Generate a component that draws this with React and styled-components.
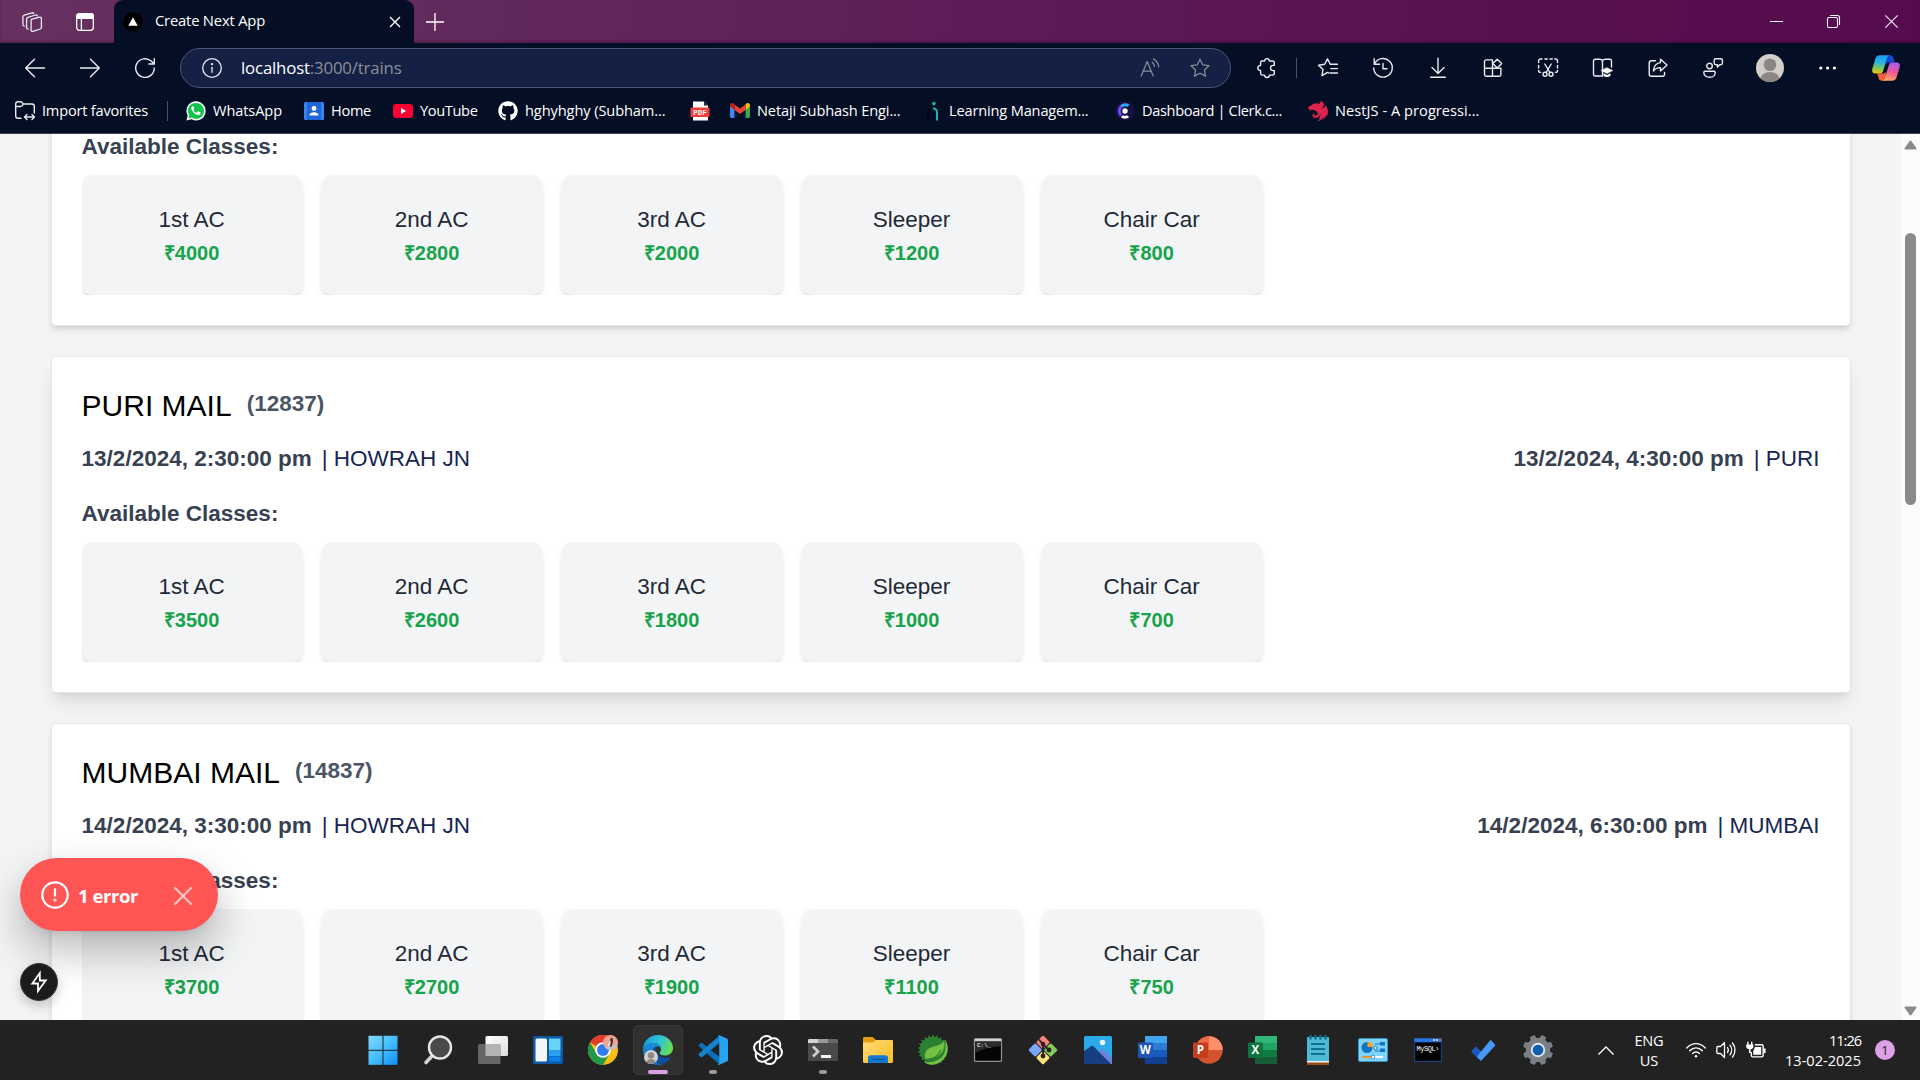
import React, { useLayoutEffect, useRef, useState } from "react";
import styled, { createGlobalStyle, css } from "styled-components";
import { FaGithub } from "react-icons/fa";
import { SiNestjs, SiOpenai } from "react-icons/si";

const GlobalStyle = createGlobalStyle`
  *, *::before, *::after { box-sizing: border-box; }
  html, body { margin: 0; padding: 0; overflow: hidden; }
  body { background: #040e24; }
  svg { display: block; flex: none; overflow: visible; }
`;

const uiFont = css`
  font-family: "Open Sans", "Noto Sans", sans-serif;
`;

/* ---------- fitted label ---------- */

const LabelBox = styled.span`
  ${uiFont}
  display: block;
  flex: none;
  width: ${(p) => p.$w}px;
  white-space: nowrap;
  font-size: ${(p) => p.$size || 14.6}px;
  font-weight: ${(p) => p.$weight || 400};
  color: ${(p) => p.$color || "#fff"};
  line-height: 20px;
`;

function Label({ w, children, size, weight, color }) {
  const ref = useRef(null);
  const [spacing, setSpacing] = useState(0);
  useLayoutEffect(() => {
    const el = ref.current;
    const natural = el.getBoundingClientRect().width;
    setSpacing((w - natural) / el.textContent.length);
  }, [w]);
  return (
    <LabelBox $w={w} $size={size} $weight={weight} $color={color}>
      <span ref={ref} style={{ letterSpacing: spacing ? `${spacing}px` : undefined }}>
        {children}
      </span>
    </LabelBox>
  );
}

/* ---------- line icons ---------- */

const Line = ({ size = 20, vb = 20, sw = 1.2, color = "#e9ebef", children }) => (
  <svg width={size} height={size} viewBox={`0 0 ${vb} ${vb}`} fill="none" stroke={color} strokeWidth={sw} strokeLinecap="round" strokeLinejoin="round">
    {children}
  </svg>
);

const Workspaces = () => (
  <Line size={22} vb={22} sw={1.3}>
    <path d="M10.500 8.400l8-2.300a1.500 1.500 0 0 1 1.900 1.500v8.800c0 .8-.4 1.300-1.200 1.600l-7.200 2.400a1.500 1.500 0 0 1-1.900-1.500V9.900c0-.8.100-1.300.4-1.500z" />
    <path d="M7 18c-.9-.2-1.400-.8-1.400-1.600V8.200c0-.9.500-1.500 1.300-1.800L14.700 4c.8-.2 1.500.3 1.700 1" />
    <path d="M3.300 15.200c-.9-.2-1.400-.8-1.400-1.600V6c0-.9.500-1.500 1.300-1.800L11 1.800c.8-.2 1.500.2 1.700.9" />
  </Line>
);
const TabsMenu = () => (
  <Line size={18} vb={18} sw={1.3} color="#fff">
    <rect x="0.7" y="0.7" width="16.600" height="16.600" rx="2.800" />
    <path d="M.7 5.400V3.300C.7 1.900 1.900.7 3.300.7h11.400c1.400 0 2.600 1.200 2.600 2.600v2.100z" fill="#fff" />
    <path d="M5.400 5.400v11.900" />
  </Line>
);
const BackIcon = () => <Line sw={1.4}><path d="M19.500 10H.7M9.500 1.200L.7 10l8.800 8.800" /></Line>;
const ForwardIcon = () => <Line sw={1.4}><path d="M.5 10h18.800M10.500 1.200l8.800 8.800-8.800 8.800" /></Line>;
const ReloadIcon = () => <Line sw={1.4}><path d="M19.300 10A9.300 9.300 0 1 1 16.200 3.100L19.300 6M19.300.6V6h-5.400" /></Line>;
const InfoIcon = () => (
  <Line sw={1.3}><circle cx="10" cy="10" r="9.300" /><path d="M10 9.300v5" /><circle cx="10" cy="6.200" r=".5" fill="#e9ebef" /></Line>
);
const ReadAloud = () => (
  <Line size={20} color="#8b8f99">
    <path d="M1.200 18L7.200 3.500 13.200 18M3.200 13.200h8" /><path d="M12.200 4.200c1.300 1 2.100 2.500 2.200 4.200M13.500.9c2.900 1.700 4.900 4.500 5.300 8" />
  </Line>
);
const starPath = "M10 1.200l2.700 5.600 6.200.9-4.500 4.300 1.100 6.100L10 15.200l-5.500 2.900 1.100-6.100L1.100 7.700l6.200-.9z";
const StarIcon = () => <Line color="#8b8f99"><path d={starPath} /></Line>;
const PuzzleIcon = () => (
  <Line sw={1.4}>
    <path d="M4.400 3h3.200c.1-1.500 1.100-2.400 2.400-2.400s2.300.9 2.400 2.400h3.100c1 0 1.800.8 1.800 1.800v2.600h-1.100c-1.600 0-2.700 1.100-2.700 2.600s1.100 2.600 2.700 2.600h1.100v2.700c0 1-.8 1.800-1.800 1.800h-3c-.1 1.400-1.200 2.400-2.500 2.400s-2.400-1-2.500-2.400H5.400c-1 0-1.800-.8-1.800-1.800v-2.700C2 12.500.8 11.500.8 10S2 7.500 3.600 7.400V4.800C3.600 3.800 3.900 3 4.400 3z" />
  </Line>
);
const Favorites = () => (
  <Line sw={1.4}>
    <path d="M10.500 14.900l-1-.5-5.500 3.300 1-6.300L.5 7.300l6.200-1L9.500.8l2.700 5.500h7.300M12.800 10.600h6.700M12 15h7.500" />
  </Line>
);
const HistoryIcon = () => <Line sw={1.4}><path d="M1.200.8v5.400h5.400M1.500 6A9.300 9.300 0 1 1 .7 10M10 5.500v5.200h4" /></Line>;
const DownloadIcon = () => <Line sw={1.4}><path d="M10 .3v15M4 9.500l6 6 6-6M2.700 19.300h14.600" /></Line>;
const AppsIcon = () => (
  <Line sw={1.4}>
    <path d="M9.500 1.900H3.200c-1 0-1.700.7-1.700 1.700v13c0 1 .7 1.700 1.700 1.700h13c1 0 1.700-.7 1.700-1.700v-6.300H1.500M9.500 1.900v16.400" />
    <path d="M14.200 1.200l4.500 4.300-4.500 4.500-4.300-4.500z" />
  </Line>
);
const CaptureIcon = () => (
  <Line sw={1.4}>
    <path d="M.6 4.500V3C.6 1.800 1.500 1 2.600 1H4M7 1h2.300M12 1h2.300M16.800 1h.7c1.100 0 2 .9 2 2v1.500M19.500 7.500V10M.6 7.500V10M.6 12.500c0 1.100.7 1.900 2 1.900M19.500 12.500c0 1.100-.9 1.900-2 1.900" />
    <path d="M6.800 6l5.100 8.500M13.200 6l-5.100 8.500" /><circle cx="7" cy="16.300" r="2" /><circle cx="13" cy="16.300" r="2" />
  </Line>
);
const LearnIcon = () => (
  <Line sw={1.4}>
    <path d="M9.500 2.800v15.600M9.500 2.800C9 1.700 8 1.300 6.500 1.300H2.200C1.200 1.300.5 2 .5 3v13.300c0 1 .7 1.700 1.700 1.700h6M9.500 2.800c.5-1.100 1.500-1.500 3-1.500h4.300c1 0 1.700.7 1.700 1.700v6" />
    <path d="M14 9.700l5.800 2.900-5.800 2.900-5.800-2.900z" fill="#fff" stroke="#fff" strokeWidth=".5" /><path d="M10.500 15.300v2.300c1.800 2 5.200 2 7 0v-2.300L14 17z" fill="#fff" stroke="none" />
  </Line>
);
const ShareIcon = () => (
  <Line sw={1.4}>
    <path d="M7.500 2.700H3.500c-1.300 0-2.300 1-2.300 2.300v11c0 1.300 1 2.300 2.300 2.300h10.800c1.300 0 2.300-1 2.300-2.300v-1.500" />
    <path d="M12.500 1.200l6.500 5.900-6.500 5.800V9.600c-3.200 0-5.500 1-7.100 3.400.3-4.700 2.800-7.900 7.100-8.400z" />
  </Line>
);
const FeedbackIcon = () => (
  <Line sw={1.4}>
    <circle cx="6.500" cy="8" r="2.800" /><path d="M2 13.200h9c.7 0 1.200.5 1.200 1.200 0 3-2.400 4.900-5.600 4.900S.8 17.400.8 14.400c0-.7.500-1.200 1.200-1.200z" />
    <path d="M12.800.7h5c.9 0 1.600.7 1.600 1.600v2.800c0 .9-.7 1.600-1.600 1.600h-1.200l-2.200 2.500V6.700h-1.600c-.9 0-1.600-.7-1.600-1.600V2.300c0-.9.700-1.600 1.600-1.600z" />
  </Line>
);
const Avatar = ({ size = 28 }) => (
  <svg width={size} height={size} viewBox="0 0 28 28">
    <clipPath id={`av${size}`}><circle cx="14" cy="14" r="14" /></clipPath>
    <g clipPath={`url(#av${size})`}><rect width="28" height="28" fill="#d2cfcb" /><circle cx="14" cy="10.800" r="6.300" fill="#8c8783" /><ellipse cx="14" cy="26" rx="9.800" ry="8" fill="#8c8783" /></g>
  </svg>
);
const DotsIcon = () => (
  <svg width="18" height="4" viewBox="0 0 18 4" fill="#fff"><circle cx="1.800" cy="2" r="1.600" /><circle cx="8.600" cy="2" r="1.600" /><circle cx="15.400" cy="2" r="1.600" /></svg>
);
const CopilotIcon = () => (
  <svg width="28" height="26" viewBox="0 0 28 26">
    <defs>
      <linearGradient id="cp1" x1=".3" y1="0" x2=".2" y2="1"><stop offset="0" stopColor="#1a9af5" /><stop offset=".4" stopColor="#28b8d8" /><stop offset=".7" stopColor="#7fc850" /><stop offset="1" stopColor="#f4c414" /></linearGradient>
      <linearGradient id="cp2" x1=".6" y1="0" x2=".4" y2="1"><stop offset="0" stopColor="#a35df0" /><stop offset=".5" stopColor="#f0569a" /><stop offset="1" stopColor="#ffa35c" /></linearGradient>
    </defs>
    <path d="M14 .3h4.500c1.600 0 2.500 1 2.900 2.400l1.300 4.700h-5.300c-1.700 0-2.600.8-3.100 2.400z" fill="#1848d2" />
    <path d="M14 25.700H9.500c-1.600 0-2.500-1-2.900-2.400l-1.300-4.700h5.300c1.700 0 2.600-.8 3.100-2.400z" fill="#f4603c" />
    <path d="M7.800.3H18c-1.500 0-2.400 1-2.900 2.600l-4 13.200c-.5 1.700-1.400 2.500-3.100 2.500H3.200c-2.500 0-3.600-2-2.900-4.500L3.400 3.800C4.100 1.500 5.400.3 7.800.3z" fill="url(#cp1)" />
    <path d="M20.200 25.700H10c1.500 0 2.400-1 2.900-2.600l4-13.200c.5-1.700 1.400-2.500 3.100-2.500h4.800c2.500 0 3.600 2 2.900 4.500l-3.100 10.300c-.7 2.300-2 3.500-4.400 3.500z" fill="url(#cp2)" />
  </svg>
);

/* ---------- bookmark icons ---------- */

const ImportIcon = () => (
  <Line size={20} sw={1.4}>
    <path d="M6 17.300H3C1.700 17.300.7 16.300.7 15V3C.7 1.700 1.700.7 3 .7h2.500c.8 0 1.300.3 1.700.9L8.300 3H17c1.300 0 2.300 1 2.300 2.300V12M.7 5.500h5c1 0 1.700-.4 2.600-2.500" />
    <path d="M9.800 16h9.500M12 13.500L9.500 16l2.500 2.500M17 13.500l2.500 2.500-2.500 2.500" />
  </Line>
);
const WhatsAppIcon = () => (
  <svg width="20" height="20" viewBox="0 0 20 20">
    <path d="M10 .3A9.600 9.600 0 0 0 1.700 14.700L.4 19.600l5-1.300A9.600 9.600 0 1 0 10 .3z" fill="#fff" />
    <path d="M10 1.900a8 8 0 0 0-6.700 12.500l-.8 3 3.100-.8A8 8 0 1 0 10 1.900z" fill="#14c34a" />
    <path d="M7.600 5.700c-.2-.5-.4-.5-.7-.5-.8 0-1.700.8-1.700 2.100 0 1.400 1 2.700 2.300 4.100 1.600 1.700 3.300 2.500 4.700 2.500 1.300 0 2.400-.9 2.400-2 0-.4 0-.6-.3-.7l-1.900-.9c-.3-.1-.5 0-.7.200l-.8 1c-.1.200-.4.200-.6.100-1.200-.5-2.200-1.400-2.800-2.400-.1-.2-.1-.4.1-.6l.6-.7c.1-.2.1-.4 0-.6z" fill="#fff" />
  </svg>
);
const HomeIcon = () => (
  <svg width="20" height="18" viewBox="0 0 20 18"><rect width="20" height="18" rx="1.500" fill="#3b82f0" /><rect x="3" width="14" height="18" fill="#1d66d6" /><circle cx="10" cy="6.500" r="2.400" fill="#fff" /><path d="M5.300 13.500c0-2 2-3.300 4.700-3.300s4.700 1.300 4.700 3.300z" fill="#fff" /></svg>
);
const YouTubeIcon = () => <svg width="20" height="14" viewBox="0 0 20 14"><rect width="20" height="14" rx="3.200" fill="#ff0033" /><path d="M8 4l5.200 3L8 10z" fill="#fff" /></svg>;
const GitHubIcon = () => <FaGithub size={20} color="#fff" />;
const PdfIcon = () => (
  <svg width="20" height="20" viewBox="0 0 20 20"><path d="M3 .5h11l4 4V19.500H3z" fill="#fff" /><path d="M14 .5v4h4z" fill="#222" /><rect x=".5" y="6.500" width="19" height="9.500" rx="1" fill="#f0403c" /><text x="10" y="13.900" textAnchor="middle" fontSize="7.400" fontWeight="700" fill="#fff" fontFamily="Liberation Mono, monospace">PDF</text></svg>
);
const GmailIcon = () => (
  <svg width="20" height="15" viewBox="0 0 20 15"><path d="M0 3v10.600C0 14.400.6 15 1.400 15h3.100V6z" fill="#4285f4" /><path d="M20 3v10.600c0 .8-.6 1.400-1.400 1.400h-3.100V6z" fill="#34a853" /><path d="M15.500 1.500V7L20 3.500V2.200c0-1.900-2.200-3-3.700-1.800z" fill="#fbbc04" /><path d="M4.500 7V1.500L10 5.600l5.500-4.100V7L10 11z" fill="#ea4335" /><path d="M0 2.200v1.300L4.500 7V1.500L3.700.4C2.200-.8 0 .3 0 2.200z" fill="#c5221f" /></svg>
);
const LearningIcon = () => (
  <svg width="20" height="20" viewBox="0 0 20 20" fill="none"><circle cx="12" cy="2.600" r="1.800" fill="#16b5b0" /><path d="M11 7.500c2.600 0 4 1.300 4 4v8" stroke="#16b5b0" strokeWidth="2" /><path d="M6 19.500v-7c0-3 1-4.300 4-5" stroke="#02060f" strokeWidth="2" /></svg>
);
const ClerkIcon = () => (
  <svg width="20" height="20" viewBox="0 0 20 20"><circle cx="10" cy="10" r="10" fill="#170f3c" /><path d="M14.500 3.600A7.600 7.600 0 0 0 5 4.600l2 2.200A4.800 4.800 0 0 1 12.700 6z" fill="#2ea5ff" /><path d="M5 4.600a7.600 7.600 0 0 0 0 10.800l2.200-2.200a4.800 4.800 0 0 1 0-6.400z" fill="#6c47ff" /><circle cx="10" cy="10" r="2.700" fill="#fff" /><path d="M5.800 16.200c2.600 1.900 5.800 1.900 8.400 0l-2-2c-1.500.8-2.900.8-4.400 0z" fill="#fff" /></svg>
);
const NestIcon = () => <SiNestjs size={20} color="#e0234e" />;

/* ---------- browser chrome ---------- */

const Screen = styled.div`
  width: 1920px;
  height: 1080px;
  display: flex;
  flex-direction: column;
  overflow: hidden;
  background: #040e24;
`;
const TitleBar = styled.header`
  flex: none;
  height: 43px;
  display: flex;
  align-items: stretch;
  background: linear-gradient(90deg, #663060 0%, #622a5d 22%, #5c1b57 55%, #57104f 80%, #560b50 100%);
  box-shadow: inset 0 -2px 2px rgba(30, 0, 30, 0.25);
`;
const TitleSlot = styled.div`
  width: ${(p) => p.$w}px;
  display: flex;
  align-items: center;
  justify-content: center;
`;
const Tab = styled.div`
  width: 300px;
  display: flex;
  align-items: center;
  padding: 0 13px 0 9px;
  background: #040e24;
  border-radius: 9px 9px 0 0;
`;
const TabTitle = styled.div`
  flex: 1;
  padding: 0 0 3px 12px;
`;
const Spacer = styled.div`
  flex: 1;
`;
const Toolbar = styled.div`
  flex: none;
  height: 49px;
  display: flex;
  align-items: center;
  padding: 1px 0 0 7px;
`;
const ToolButton = styled.div`
  flex: none;
  width: ${(p) => p.$w || 55}px;
  height: 40px;
  display: flex;
  align-items: center;
  justify-content: center;
`;
const AddressBar = styled.div`
  flex: none;
  width: 1051px;
  height: 40px;
  margin: 0 8px 0 8px;
  padding: 0 20px 0 21px;
  display: flex;
  align-items: center;
  border: 1px solid #4c5774;
  border-radius: 20px;
  background: #142044;
`;
const UrlWrap = styled.div`
  flex: 1;
  padding: 0 0 0 19px;
`;
const UrlPath = styled.span`
  color: #8b8f99;
`;
const AddressActions = styled.div`
  display: flex;
  gap: 30px;
`;
const Divider = styled.div`
  flex: none;
  width: 1px;
  height: 20px;
  background: #4a5162;
  margin: ${(p) => p.$m};
`;
const Bookmarks = styled.nav`
  flex: none;
  height: 42px;
  display: flex;
  align-items: center;
  padding: 0 0 4px 15px;
  border-bottom: 1px solid #3a4250;
`;
const Bookmark = styled.div`
  flex: none;
  width: ${(p) => p.$w}px;
  display: flex;
  align-items: center;
  gap: 7px;

  ${LabelBox} {
    margin-bottom: 2px;
  }
`;

const bookmarks = [
  { w: 118, icon: <WhatsAppIcon />, text: "WhatsApp", tw: 69 },
  { w: 89, icon: <HomeIcon />, text: "Home", tw: 40 },
  { w: 105, icon: <YouTubeIcon />, text: "YouTube", tw: 57.5 },
  { w: 192, icon: <GitHubIcon />, text: "hghyhghy (Subham...", tw: 140.5 },
  { w: 40, icon: <PdfIcon /> },
  { w: 192, icon: <GmailIcon />, text: "Netaji Subhash Engi...", tw: 143.5 },
  { w: 193, icon: <LearningIcon />, text: "Learning Managem...", tw: 139.5 },
  { w: 193, icon: <ClerkIcon />, text: "Dashboard | Clerk.c...", tw: 140 },
  { w: 190, icon: <NestIcon />, text: "NestJS - A progressi...", tw: 144.5 },
];

const toolIcons = [Favorites, HistoryIcon, DownloadIcon, AppsIcon, CaptureIcon, LearnIcon, ShareIcon, FeedbackIcon];

function BrowserChrome() {
  return (
    <>
      <TitleBar>
        <TitleSlot $w={64}><Workspaces /></TitleSlot>
        <TitleSlot $w={42}><TabsMenu /></TitleSlot>
        <TitleSlot $w={8} />
        <Tab>
          <svg width="20" height="20" viewBox="0 0 20 20"><circle cx="10" cy="10" r="9.800" fill="#000" /><path d="M10 5.200l4.700 8.600H5.300z" fill="#fff" /></svg>
          <TabTitle><Label w={110} size={14.8}>Create Next App</Label></TabTitle>
          <svg width="12" height="12" viewBox="0 0 12 12" stroke="#fff" strokeWidth="1.400"><path d="M1 1l10 10M11 1L1 11" /></svg>
        </Tab>
        <TitleSlot $w={42}>
          <svg width="18" height="18" viewBox="0 0 18 18" stroke="#fff" strokeWidth="1.300"><path d="M9 0v18M0 9h18" /></svg>
        </TitleSlot>
        <Spacer />
        <TitleSlot $w={58}><svg width="13" height="1" viewBox="0 0 13 1"><rect width="13" height="1" fill="#fff" /></svg></TitleSlot>
        <TitleSlot $w={57}>
          <svg width="13" height="13" viewBox="0 0 13 13" fill="none" stroke="#fff" strokeWidth="1.100"><rect x=".5" y="2.500" width="10" height="10" rx="1.500" /><path d="M3 .5h7.500c1.200 0 2 .8 2 2V10" /></svg>
        </TitleSlot>
        <TitleSlot $w={58}><svg width="13" height="13" viewBox="0 0 13 13" stroke="#f0e6ef" strokeWidth="1.200"><path d="M.3.3l12.400 12.400M12.700.3L.3 12.700" /></svg></TitleSlot>
      </TitleBar>
      <Toolbar>
        <ToolButton><BackIcon /></ToolButton>
        <ToolButton><ForwardIcon /></ToolButton>
        <ToolButton><ReloadIcon /></ToolButton>
        <AddressBar>
          <InfoIcon />
          <UrlWrap>
            <Label w={160.5} size={16.8}>localhost<UrlPath>:3000/trains</UrlPath></Label>
          </UrlWrap>
          <AddressActions><ReadAloud /><StarIcon /></AddressActions>
        </AddressBar>
        <ToolButton><PuzzleIcon /></ToolButton>
        <Divider $m="0 3px 0 2px" />
        {toolIcons.map((Icon, i) => <ToolButton key={i}><Icon /></ToolButton>)}
        <ToolButton $w={60}><Avatar /></ToolButton>
        <ToolButton><DotsIcon /></ToolButton>
        <ToolButton $w={61}><CopilotIcon /></ToolButton>
      </Toolbar>
      <Bookmarks>
        <Bookmark $w={152}><ImportIcon /><Label w={106}>Import favorites</Label></Bookmark>
        <Divider $m="0 18px 0 0" />
        {bookmarks.map((b, i) => (
          <Bookmark key={i} $w={b.w}>{b.icon}{b.text && <Label w={b.tw}>{b.text}</Label>}</Bookmark>
        ))}
      </Bookmarks>
    </>
  );
}

/* ---------- trains page ---------- */

const Viewport = styled.div`
  position: relative;
  flex: none;
  height: 886px;
  display: flex;
  overflow: hidden;
  background: #f3f4f6;
  font-family: "Liberation Sans", Arial, sans-serif;
`;
const TrainList = styled.main`
  flex: 1;
  display: flex;
  flex-direction: column;
  gap: 30px;
  margin-top: -145px;
  padding: 0 50.4px 0 51px;
`;
const Card = styled.section`
  flex: none;
  height: 337px;
  padding: 29px 30px 30px 29.6px;
  border: 1px solid #e5e7eb;
  border-radius: 5px;
  background: #fff;
  box-shadow: ${(p) => p.$raised
    ? "0 12.5px 18.75px -3.75px rgba(0,0,0,.1), 0 5px 7.5px -5px rgba(0,0,0,.1)"
    : "0 5px 7.5px -1.25px rgba(0,0,0,.1), 0 2.5px 5px -2.5px rgba(0,0,0,.1)"};
`;
const CardHeader = styled.div`
  display: flex;
  align-items: flex-start;
  gap: 15px;
`;
const TrainName = styled.h2`
  margin: 0;
  font-size: 30px;
  line-height: 40px;
  font-weight: 400;
  color: #000;
`;
const TrainNumber = styled.span`
  font-size: 22.5px;
  line-height: 35px;
  font-weight: 700;
  color: #4b5563;
`;
const Journey = styled.div`
  display: flex;
  justify-content: space-between;
  margin-top: 15px;
  font-size: 22.5px;
  line-height: 35px;
`;
const Time = styled.span`
  margin-right: 10px;
  font-weight: 700;
  color: #374151;
`;
const Station = styled.span`
  color: #172554;
`;
const ClassesTitle = styled.h3`
  margin: 20px 0 11px;
  font-size: 22.5px;
  line-height: 35px;
  font-weight: 700;
  color: #374151;
`;
const ClassRow = styled.div`
  display: flex;
  gap: 20px;
  height: 120px;
  overflow: hidden;
`;
const ClassCard = styled.div`
  flex: none;
  width: 220px;
  display: flex;
  flex-direction: column;
  align-items: center;
  justify-content: center;
  border-radius: 10px;
  background: #f3f4f6;
  box-shadow: 0 5px 7.5px -1.25px rgba(0,0,0,.1), 0 2.5px 5px -2.5px rgba(0,0,0,.1);
`;
const ClassName = styled.span`
  margin: -1px 0 1px;
  font-size: 22.5px;
  line-height: 35px;
  color: #1f2937;
`;
const Price = styled.span`
  font-size: 20px;
  line-height: 30px;
  font-weight: 700;
  color: #16a34a;
`;
const Scrollbar = styled.div`
  flex: none;
  width: 19px;
  display: flex;
  flex-direction: column;
  align-items: center;
  background: #fcfcfc;
  padding: 6px 0 4px;
`;
const Thumb = styled.div`
  width: 11px;
  height: 272px;
  margin-top: 83px;
  border-radius: 6px;
  background: #8a8a8a;
`;
const Toast = styled.div`
  position: absolute;
  left: 20px;
  top: 724px;
  width: 198px;
  height: 73px;
  padding: 0 26px 0 21px;
  display: flex;
  align-items: center;
  border-radius: 37px;
  background: #ff5555;
  box-shadow: 0 20px 40px 2px rgba(0,0,0,.25), 0 5px 13px -10px rgba(0,0,0,.3);
`;
const ToastText = styled.div`
  flex: 1;
  padding: 2px 0 0 9px;
`;
const ToastClose = styled.div`
  padding-top: 2px;
`;
const DevBadge = styled.div`
  position: absolute;
  left: 20px;
  top: 829px;
  width: 38px;
  height: 38px;
  display: flex;
  align-items: center;
  justify-content: center;
  border-radius: 50%;
  background: #1c1c1e;
  border: 1px solid #3a3a3c;
  box-shadow: 0 5px 12px rgba(0,0,0,.2);
`;
/* Stands in for the heading and journey rows that are scrolled out of view. */
const ScrolledOff = styled.div`
  height: 90px;
`;

const classNames = ["1st AC", "2nd AC", "3rd AC", "Sleeper", "Chair Car"];
const trains = [
  { prices: [4000, 2800, 2000, 1200, 800] },
  { name: "PURI MAIL", number: "12837", from: "HOWRAH JN", to: "PURI", dep: "13/2/2024, 2:30:00 pm", arr: "13/2/2024, 4:30:00 pm", prices: [3500, 2600, 1800, 1000, 700], raised: true },
  { name: "MUMBAI MAIL", number: "14837", from: "HOWRAH JN", to: "MUMBAI", dep: "14/2/2024, 3:30:00 pm", arr: "14/2/2024, 6:30:00 pm", prices: [3700, 2700, 1900, 1100, 750] },
];

function TrainCard({ train }) {
  return (
    <Card $raised={train.raised}>
      {!train.name ? <ScrolledOff /> : (
        <>
          <CardHeader>
            <TrainName>{train.name}</TrainName>
            <TrainNumber>({train.number})</TrainNumber>
          </CardHeader>
          <Journey>
            <div><Time>{train.dep}</Time><Station>| {train.from}</Station></div>
            <div><Time>{train.arr}</Time><Station>| {train.to}</Station></div>
          </Journey>
        </>
      )}
      <ClassesTitle>Available Classes:</ClassesTitle>
      <ClassRow>
        {classNames.map((c, i) => (
          <ClassCard key={c}><ClassName>{c}</ClassName><Price>₹{train.prices[i]}</Price></ClassCard>
        ))}
      </ClassRow>
    </Card>
  );
}

function TrainsPage() {
  return (
    <Viewport>
      <TrainList>
        {trains.map((t, i) => <TrainCard key={i} train={t} />)}
      </TrainList>
      <Scrollbar>
        <svg width="13" height="10" viewBox="0 0 13 10"><path d="M6.500 1.500l5 7h-10z" fill="#8a8a8a" stroke="#8a8a8a" strokeWidth="2" strokeLinejoin="round" /></svg>
        <Thumb />
        <Spacer />
        <svg width="13" height="10" viewBox="0 0 13 10"><path d="M6.500 8.500l5-7h-10z" fill="#8a8a8a" stroke="#8a8a8a" strokeWidth="2" strokeLinejoin="round" /></svg>
      </Scrollbar>
      <Toast>
        <svg width="28" height="28" viewBox="0 0 28 28" fill="none" stroke="#fff" strokeWidth="2.200"><circle cx="14" cy="14" r="12.700" /><path d="M14 7.500v8" /><circle cx="14" cy="19" r=".5" /></svg>
        <ToastText><Label w={60} size={18.6} weight={700}>1 error</Label></ToastText>
        <ToastClose>
          <svg width="18" height="18" viewBox="0 0 18 18" stroke="#ffc4c4" strokeWidth="2.200" strokeLinecap="round"><path d="M1 1l16 16M17 1L1 17" /></svg>
        </ToastClose>
      </Toast>
      <DevBadge>
        <svg width="16" height="20" viewBox="0 0 16 20" fill="none" stroke="#fff" strokeWidth="1.800" strokeLinejoin="miter"><path d="M8.800 1L1.300 11.500H7V19l7.700-10.500H8.800z" /></svg>
      </DevBadge>
    </Viewport>
  );
}

/* ---------- taskbar icons ---------- */

const WindowsIcon = () => (
  <svg width="30" height="30" viewBox="0 0 30 30">
    <defs><linearGradient id="win" x1="0" y1="0" x2="30" y2="30" gradientUnits="userSpaceOnUse"><stop offset="0" stopColor="#84dbff" /><stop offset=".5" stopColor="#47bdfd" /><stop offset="1" stopColor="#0a8ff5" /></linearGradient></defs>
    <g fill="url(#win)"><rect x=".5" y=".8" width="14" height="14" /><rect x="15.500" y=".8" width="14" height="14" /><rect x=".5" y="15.800" width="14" height="14" /><rect x="15.500" y="15.800" width="14" height="14" /></g>
  </svg>
);
const SearchIcon = () => (
  <svg width="30" height="30" viewBox="0 0 30 30"><path d="M9.500 20.500L3 27.500" stroke="#cfd3d6" strokeWidth="3.600" strokeLinecap="round" /><circle cx="17" cy="12.500" r="11" fill="#4a4a4a" stroke="#e4e7e9" strokeWidth="2.400" /></svg>
);
const TaskViewIcon = () => (
  <svg width="30" height="30" viewBox="0 0 30 30"><defs><linearGradient id="tv" x1="0" y1="0" x2="1" y2="1"><stop offset="0" stopColor="#fff" /><stop offset="1" stopColor="#ddd" /></linearGradient></defs><rect x="7.500" y="1" width="22.500" height="20" rx="1.500" fill="url(#tv)" /><rect x="0" y="9" width="22.500" height="20" rx="1.500" fill="#6e6e6e" opacity=".9" /><path d="M7.500 9h15v12H9A1.500 1.500 0 0 1 7.500 19.500z" fill="#b4b4b4" /></svg>
);
const WidgetsIcon = () => (
  <svg width="30" height="30" viewBox="0 0 30 30"><rect y="1" width="30" height="28" rx="1.500" fill="#0c59a4" /><rect x="2.500" y="3.500" width="11.500" height="23" rx="1.500" fill="#f4f6f8" /><rect x="16" y="3.500" width="11.500" height="12" fill="#69d2fb" /><rect x="16" y="16" width="11.500" height="5" fill="#2aa0f2" /><rect x="16" y="21.500" width="11.500" height="5" fill="#0a80e8" /></svg>
);
const ChromeIcon = () => (
  <svg width="30" height="30" viewBox="0 0 30 30">
    <circle cx="15" cy="15" r="15" fill="#f9bc11" /><path d="M15 15L2 7.500A15 15 0 0 1 28 7.500H15z" fill="#e33b2e" /><path d="M2 7.500A15 15 0 0 0 15 30L21.500 18.700 8.600 18.700z" fill="#21974a" /><circle cx="15" cy="15" r="7.800" fill="#fff" /><circle cx="15" cy="15" r="6" fill="#2f7df0" />
    <circle cx="22.500" cy="7.500" r="7.500" fill="#f0a292" /><path d="M17 12.500c3-1 7-.5 12.800-4.500a7.500 7.500 0 0 1-12.800 4.500z" fill="#bcc7d4" /><path d="M22 4l2.500-1.500.5 4-1.500 5.500-1.500-.5 1-4z" fill="#333" /><path d="M22 5l-2.500 6h1.500z" fill="#fff" />
  </svg>
);
const EdgeIcon = () => (
  <svg width="30" height="30" viewBox="0 0 30 30">
    <defs><linearGradient id="ed1" x1="0" y1=".3" x2="1" y2=".6"><stop offset="0" stopColor="#1a9be0" /><stop offset=".5" stopColor="#2fc4d8" /><stop offset="1" stopColor="#6be04a" /></linearGradient><linearGradient id="ed2" x1="0" y1="0" x2="0" y2="1"><stop offset="0" stopColor="#1a90dd" /><stop offset="1" stopColor="#0b63c0" /></linearGradient></defs>
    <path d="M0 15C0 6 6.500 0 15 0s15 6 15 13c0 5-4 7.500-8 7.500-3.500 0-5.500-1.500-5.500-2.500 0-.6 1.500-1.400 1.500-4 0-3-3-6-7.500-6C5 8 1 11 0 15z" fill="url(#ed1)" />
    <path d="M0 15c1-4 5-7 10.500-7 4 0 6.800 2.300 7.400 4.800-1-.8-2.300-1.300-3.700-1.300-3 0-4.700 3-4.700 6 0 6 5 11 10.500 12.500-1.600.4-3.300 0-5 0C6.500 30 0 23.500 0 15z" fill="url(#ed2)" />
    <path d="M12.200 12c-2 1.400-2.700 3.400-2.700 5.500 0 6 5 10.500 10.500 11.700 3.500-1.200 6-3.700 7.500-6.500.3-.6-.2-.9-.7-.7-6.500 2.900-13.500-1-14.600-10z" fill="#0c4f9e" />
  </svg>
);
const VSCodeIcon = () => (
  <svg width="30" height="30" viewBox="0 0 30 30"><path d="M1 9.700L2.800 8c.5-.4 1-.4 1.500 0L22 22.500V30L.9 11.300c-.5-.5-.5-1.100.1-1.600z" fill="#0a6fb8" /><path d="M1 20.300L2.800 22c.5.4 1 .4 1.500 0L22 7.500V0L.9 18.700c-.5.5-.5 1.100.1 1.600z" fill="#1584cc" /><path d="M21.500.2L28.700 3.400c.8.400 1.300 1 1.300 1.900v19.400c0 .9-.5 1.500-1.300 1.900l-7.200 3.200c-.9.3-1.500 0-2-.5.7.4 1.700 0 1.700-1V1.700c0-1-1-1.400-1.700-1 .5-.5 1.100-.8 2-.5z" fill="#28a4ef" /></svg>
);
const TerminalIcon = () => (
  <svg width="30" height="24" viewBox="0 0 30 24"><rect y="1" width="30" height="22" rx="1.500" fill="#4a4a4a" /><path d="M0 2.500C0 1.500.7 1 1.500 1H10v4H0z" fill="#d4d4d4" /><path d="M10 1h10v4H10z" fill="#999" /><path d="M20 1h8.500c.8 0 1.500.5 1.500 1.500V5H20z" fill="#666" /><path d="M5 8.500l5 5-5 5" fill="none" stroke="#ccc" strokeWidth="2.800" /><rect x="13" y="17" width="10" height="3" fill="#f4f4f4" /></svg>
);
const FolderIcon = () => (
  <svg width="30" height="28" viewBox="0 0 30 28"><defs><linearGradient id="fd" x1="0" y1="0" x2="1" y2="1"><stop offset="0" stopColor="#ffdc78" /><stop offset="1" stopColor="#fbbc24" /></linearGradient></defs><path d="M0 2.500C0 1.600.6 1 1.500 1h8l3.500 3h15.500c.9 0 1.500.6 1.500 1.500V12H0z" fill="#e5a00e" /><path d="M0 6.500h10.500L13 4h15.500c.9 0 1.500.6 1.500 1.500v20c0 .9-.6 1.500-1.500 1.500h-27C.6 27 0 26.400 0 25.500z" fill="url(#fd)" /><path d="M5 27v-5c0-1.700 1-2.700 2.700-2.700h14.600c1.700 0 2.700 1 2.700 2.700v5z" fill="#1379cf" /><rect x="8.500" y="22.800" width="13" height="1" fill="#0b4d92" /></svg>
);
const gearPoints = (n, r1, r2, c) => {
  const pts = [];
  for (let i = 0; i < n; i++) {
    [[-0.28, r1], [-0.16, r2], [0.16, r2], [0.28, r1]].forEach(([o, r]) => {
      const a = ((i + o) / n) * Math.PI * 2;
      pts.push(`${(c + Math.sin(a) * r).toFixed(2)},${(c - Math.cos(a) * r).toFixed(2)}`);
    });
  }
  return pts.join(" ");
};
const SpringIcon = () => (
  <svg width="30" height="30" viewBox="0 0 30 30"><polygon points={gearPoints(22, 13.2, 15, 15)} fill="#2c8034" /><path d="M27 4c4 6 4 15-2 21S10 31 6 26.500C10 28 18 27 23 23s5-12 4-19z" fill="#74c043" /><path d="M26.500 5C24 10.500 18 10.500 13 12.500c-5 2-7 6-5.500 11.500 3.500.2 9 0 13.500-3.500S27 12 26.500 5z" fill="#74c043" /><path d="M7 24.500c7 0 13-2 16-9.500" fill="none" stroke="#2c7a30" strokeWidth="1.200" /></svg>
);
const CmdIcon = () => (
  <svg width="28" height="24" viewBox="0 0 28 24"><rect x=".5" y=".7" width="27" height="22.600" rx="1" fill="#050505" stroke="#8d9296" strokeWidth="1.200" /><rect x="1" y="1" width="26" height="2.500" fill="#ccd2d6" /><path d="M1.200 3.500h25.600v5C18 8.500 10 10 1.200 15z" fill="#2c2c2c" /><text x="3" y="9" fontSize="6" fontWeight="700" fill="#ddd" fontFamily="Liberation Mono, monospace">C:\_</text></svg>
);
const GitIcon = () => (
  <svg width="30" height="30" viewBox="0 0 30 30"><g transform="rotate(45 15 15)"><rect x="4.500" y="4.500" width="10" height="10" rx="1.500" fill="#f8807c" /><rect x="15.500" y="4.500" width="10" height="10" rx="1.500" fill="#84cc5c" /><rect x="4.500" y="15.500" width="10" height="10" rx="1.500" fill="#7aa8ff" /><rect x="15.500" y="15.500" width="10" height="10" rx="1.500" fill="#ffe07a" /></g><path d="M11 4.500l4 5v12M15 9.500l6 5.500" stroke="#262220" strokeWidth="1.800" fill="none" /><circle cx="15" cy="9" r="2.200" fill="#262220" /><circle cx="21" cy="15" r="2.400" fill="#262220" /><circle cx="15" cy="21" r="2.400" fill="#262220" /></svg>
);
const PhotosIcon = () => (
  <svg width="28" height="28" viewBox="0 0 28 28"><rect width="28" height="28" rx="1.500" fill="#2caaea" /><path d="M13 18l5.500-5.500L28 22v6H13z" fill="#6d80da" /><path d="M0 15l7.500-5c.6-.4 1.300-.4 1.900.2L27 28H1.500C.6 28 0 27.400 0 26.500z" fill="#153f80" /><circle cx="18.500" cy="6.500" r="2.700" fill="#f2f8ff" /></svg>
);
const OfficeText = ({ children }) => (
  <text x="7.300" y="18.300" textAnchor="middle" fontSize="11.500" fontWeight="700" fill="#fff" fontFamily="Open Sans, sans-serif">{children}</text>
);
const OfficeSheet = ({ colors, badge, letter }) => (
  <svg width="30" height="28" viewBox="0 0 30 28"><rect x="7" width="22" height="28" rx="1" fill={colors[1]} /><path d="M7 1c0-.6.400-1 1-1h20c.6 0 1 .4 1 1v6H7z" fill={colors[0]} /><rect x="7" y="14" width="22" height="7" fill={colors[2]} /><path d="M7 21h22v6c0 .6-.4 1-1 1H8c-.6 0-1-.4-1-1z" fill={colors[3]} /><rect x="0" y="6.500" width="15" height="15.500" rx="1.300" fill={badge} /><OfficeText>{letter}</OfficeText></svg>
);
const WordIcon = () => <OfficeSheet colors={["#41a5ee", "#2b7cd3", "#185abd", "#103f91"]} badge="#1d56b8" letter="W" />;
const ExcelIcon = () => <OfficeSheet colors={["#30b878", "#21a366", "#107c41", "#185c37"]} badge="#0f7340" letter="X" />;
const PowerPointIcon = () => (
  <svg width="30" height="28" viewBox="0 0 30 28"><circle cx="16" cy="14" r="13.700" fill="#d35230" /><path d="M16 .3A13.700 13.700 0 0 0 2.300 14H16z" fill="#ed6c47" /><path d="M16 .3A13.700 13.700 0 0 1 29.700 14H16z" fill="#ff8f6b" /><rect x="0" y="6.500" width="15" height="15.500" rx="1.300" fill="#c43e1c" /><OfficeText>P</OfficeText></svg>
);
const NotepadIcon = () => (
  <svg width="22" height="30" viewBox="0 0 22 30"><rect y="2" width="22" height="25" rx="1" fill="#4fbad6" /><rect y="26" width="22" height="2" fill="#eef" /><rect y="27.500" width="22" height="2.500" fill="#9a4c12" /><path d="M3.500 0v4.500M8.500 0v4.500M13.500 0v4.500M18.500 0v4.500" stroke="#116b8c" strokeWidth="2.400" /><path d="M4 9h14M4 14h14M4 19h14" stroke="#0f7094" strokeWidth="1.800" /></svg>
);
const ControlIcon = () => (
  <svg width="30" height="24" viewBox="0 0 30 24"><rect x=".5" y=".5" width="29" height="23" rx="1.500" fill="#7fd3f8" stroke="#3b93c8" /><circle cx="9" cy="9.500" r="5.500" fill="#1273c5" /><path d="M9.500 3.500a5.500 5.500 0 0 1 5.500 5.500H9.500z" fill="#f5a223" /><path d="M17 6h5M17 13h5" stroke="#1273c5" /><rect x="22" y="4" width="5" height="3.500" fill="#1273c5" /><rect x="22" y="10.500" width="5" height="3.500" fill="#1273c5" /><circle cx="17.500" cy="10" r="1.700" fill="#fff" stroke="#1273c5" /><rect x="4" y="18" width="10" height="1.800" fill="#f08c1e" /><rect x="17" y="18" width="8" height="1.800" fill="#fff" /><circle cx="15" cy="19" r="1.800" fill="#fff" stroke="#1273c5" strokeWidth=".7" /></svg>
);
const MySqlIcon = () => (
  <svg width="28" height="24" viewBox="0 0 28 24"><rect width="28" height="24" rx="1" fill="#1c3f80" /><rect x=".5" y=".5" width="27" height="3.500" fill="#2a76e0" /><rect x="19" y="1" width="2" height="2" fill="#a8cdf8" /><rect x="22" y="1" width="2" height="2" fill="#a8cdf8" /><rect x="25" y="1" width="2" height="2" fill="#e0552e" /><rect x="1.200" y="4.500" width="25.600" height="18.300" fill="#000" /><text x="14" y="12.500" textAnchor="middle" fontSize="7" fill="#fff" textLength="23" fontFamily="Liberation Mono, monospace">MySQL›</text></svg>
);
const TodoIcon = () => (
  <svg width="26" height="22" viewBox="0 0 26 22"><path d="M1.600 11.700L5.300 8c.4-.4.9-.4 1.300 0l7 7-4.400 4.800c-.4.4-.9.400-1.300 0l-6.300-6.800c-.4-.4-.4-.9 0-1.300z" fill="#195abd" /><path d="M7 17.500L20 1.600c.4-.4.9-.4 1.300 0L25 5.500c.4.400.4.900 0 1.300L11.500 21.500c-.4.400-.9.400-1.300 0z" fill="#4799f8" /></svg>
);
const SettingsIcon = () => (
  <svg width="30" height="30" viewBox="0 0 30 30"><polygon points={gearPoints(8, 11.5, 14.5, 15)} fill="#7b8086" stroke="#7b8086" strokeWidth="1.500" strokeLinejoin="round" transform="rotate(22.5 15 15)" /><circle cx="15" cy="15" r="7.200" fill="#e2e5e8" /><circle cx="15" cy="15" r="5.300" fill="#0e5eaf" /></svg>
);

/* ---------- taskbar ---------- */

const Taskbar = styled.footer`
  flex: none;
  height: 60px;
  display: flex;
  align-items: center;
  padding-left: 355px;
  background: #222222;
`;
const AppSlot = styled.div`
  position: relative;
  flex: none;
  width: 55px;
  height: 60px;
  display: flex;
  align-items: center;
  justify-content: center;
`;
const ActiveTile = styled.div`
  width: 50px;
  height: 50px;
  display: flex;
  align-items: center;
  justify-content: center;
  border-radius: 5px;
  border: 1px solid #393939;
  background: #303030;
`;
const Indicator = styled.div`
  position: absolute;
  bottom: 6px;
  left: 50%;
  transform: translateX(-50%);
  width: ${(p) => (p.$active ? 20 : 8)}px;
  height: 4px;
  border-radius: 2px;
  background: ${(p) => (p.$active ? "#d9a0e4" : "#9a9a9a")};
`;
const ProfileBadge = styled.div`
  position: absolute;
  left: 14px;
  top: 30px;
`;
const TraySlot = styled.div`
  flex: none;
  width: ${(p) => p.$w}px;
  height: 60px;
  display: flex;
  flex-direction: column;
  align-items: ${(p) => p.$align || "center"};
  justify-content: center;
`;
const Notice = styled.div`
  flex: none;
  ${uiFont}
  width: 20px;
  height: 20px;
  margin-left: 14px;
  border-radius: 50%;
  background: #dba0e6;
  color: #2a1a2c;
  font-size: 13px;
  line-height: 20px;
  text-align: center;
`;

const apps = [
  { icon: <WindowsIcon /> }, { icon: <SearchIcon /> }, { icon: <TaskViewIcon /> }, { icon: <WidgetsIcon /> },
  { icon: <ChromeIcon /> }, { icon: <EdgeIcon />, active: true }, { icon: <VSCodeIcon />, running: true },
  { icon: <SiOpenai size={30} color="#fff" /> }, { icon: <TerminalIcon />, running: true }, { icon: <FolderIcon /> },
  { icon: <SpringIcon /> }, { icon: <CmdIcon /> }, { icon: <GitIcon /> }, { icon: <PhotosIcon /> }, { icon: <WordIcon /> },
  { icon: <PowerPointIcon /> }, { icon: <ExcelIcon /> }, { icon: <NotepadIcon /> }, { icon: <ControlIcon /> },
  { icon: <MySqlIcon /> }, { icon: <TodoIcon /> }, { icon: <SettingsIcon /> },
];

function WindowsTaskbar() {
  return (
    <Taskbar>
      {apps.map((a, i) => (
        <AppSlot key={i}>
          {a.active ? <ActiveTile>{a.icon}</ActiveTile> : a.icon}
          {a.active && <ProfileBadge><Avatar size={14} /></ProfileBadge>}
          {(a.active || a.running) && <Indicator $active={a.active} />}
        </AppSlot>
      ))}
      <TraySlot $w={15} />
      <TraySlot $w={52}><svg width="16" height="9" viewBox="0 0 16 9" fill="none" stroke="#fff" strokeWidth="1.300"><path d="M.5 8.500L8 1l7.500 7.500" /></svg></TraySlot>
      <TraySlot $w={34}>
        <Label w={29} size={14.6}>ENG</Label>
        <Label w={18.5} size={14.6}>US</Label>
      </TraySlot>
      <TraySlot $w={18} />
      <TraySlot $w={24}>
        <svg width="20" height="16" viewBox="0 0 20 16" fill="none" stroke="#fff" strokeWidth="1.400" strokeLinecap="round"><path d="M.8 6C6 .2 14 .2 19.200 6M3.700 8.800c3.600-3.900 9-3.900 12.600 0M6.600 11.500c2-2.100 4.800-2.100 6.800 0" /><circle cx="10" cy="14.300" r="1.200" fill="#fff" stroke="none" /></svg>
      </TraySlot>
      <TraySlot $w={36}>
        <svg width="20" height="18" viewBox="0 0 20 18" fill="none" stroke="#fff" strokeWidth="1.300" strokeLinecap="round" strokeLinejoin="round"><path d="M8.500 1.500v15L4.500 12.500H2c-.8 0-1.200-.4-1.200-1.200V6.700c0-.8.4-1.200 1.200-1.200h2.500z" /><path d="M11.500 6.500c1 1.500 1 3.500 0 5M14 4.200c2.200 2.800 2.200 6.800 0 9.600M16.500 2c3.300 4 3.300 10 0 14" /></svg>
      </TraySlot>
      <TraySlot $w={24}>
        <svg width="20" height="18" viewBox="0 0 20 18" fill="none" stroke="#fff" strokeWidth="1.400"><path d="M9 3.700h6.500c1 0 1.700.7 1.700 1.700v8.800c0 1-.7 1.700-1.700 1.700H7c-1 0-1.700-.7-1.700-1.700V11" /><path d="M9 5.900h6.200v7.800H7.300V10z" fill="#fff" stroke="none" /><path d="M18 7.500h1.600v4.500H18z" fill="#fff" stroke="none" /><path d="M1.200.8h1.400v3H1.200zM5 .8h1.400v3H5zM.2 3.600h7.200v1.600c0 1.700-1 2.800-2.800 2.900V12H3V8.100C1.200 8 .2 6.900.2 5.200z" fill="#fff" stroke="none" /></svg>
      </TraySlot>
      <TraySlot $w={93} />
      <TraySlot $w={0} $align="flex-end">
        <Label w={32} size={14.6}>11:26</Label>
        <Label w={76} size={14.6}>13-02-2025</Label>
      </TraySlot>
      <Notice>1</Notice>
    </Taskbar>
  );
}

export default function App() {
  return (
    <Screen>
      <GlobalStyle />
      <BrowserChrome />
      <TrainsPage />
      <WindowsTaskbar />
    </Screen>
  );
}
